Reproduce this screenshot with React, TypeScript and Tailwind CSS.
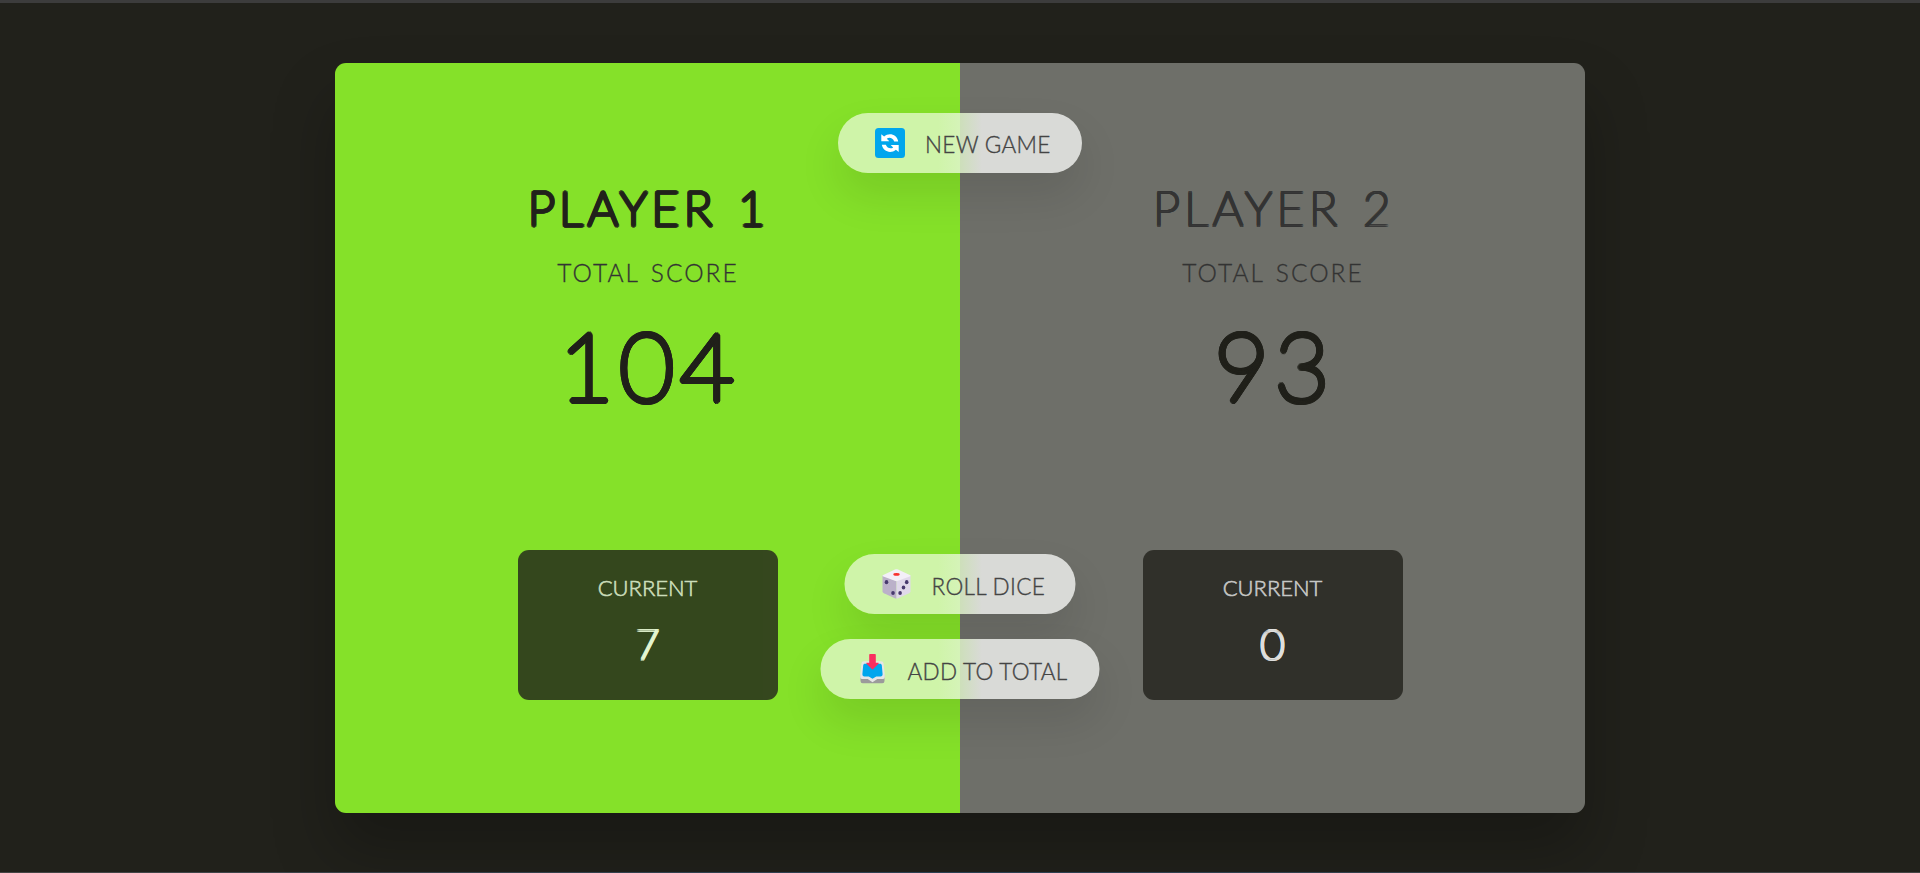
import type { CSSProperties, ReactNode } from "react";

// Thickens hairline lettering evenly in every direction, which rounds stroke ends.
function rounded(radius: number): CSSProperties {
  const shadows: string[] = [];
  const rings = radius > 2 ? [radius, radius * 0.55] : [radius];
  for (const r of rings) {
    for (let i = 0; i < 16; i++) {
      const a = (i * Math.PI) / 8;
      shadows.push(`${(r * Math.cos(a)).toFixed(2)}px ${(r * Math.sin(a)).toFixed(2)}px 0 currentColor`);
    }
  }
  return { textShadow: shadows.join(", ") };
}

function RestartIcon() {
  return (
    <svg viewBox="0 0 30 30" className="size-[30px]">
      <rect width="30" height="30" rx="3.5" fill="#00a6ed" />
      <path d="M6.3 6.2v7h8l-2.5-2.4c2.3-1.9 6-1 7.4 2.6h4C21.9 6.5 14.3 4.2 9.1 8.5z" fill="#fff" />
      <path d="M23.7 24v-7h-8l2.5 2.4c-2.3 1.9-6 1-7.4-2.6h-4C8.1 23.7 15.7 26 20.9 21.7z" fill="#fff" />
    </svg>
  );
}

function DiceIcon() {
  return (
    <svg viewBox="0 0 30 30" className="size-[30px]">
      <path d="M1 6.5 15 12v17.8c-1 0-12.200-5.300-13-5.800-.6-.4-1-.9-1-1.700z" fill="#bbb1c9" />
      <path d="M29 6.500 15 12v17.800c1 0 12.200-5.300 13-5.800.6-.4 1-.9 1-1.700z" fill="#e0d9ea" />
      <path d="M1.200 6.300 13.500.5c1-.4 2-.4 3 0L28.800 6.300c.3.300.3.700 0 .9L16 12c-.6.200-1.400.200-2 0L1.200 7.200c-.3-.2-.3-.6 0-.9z" fill="#f3eff8" />
      <ellipse cx="15" cy="5.400" rx="3.200" ry="1.400" fill="#f8312f" />
      <g fill="#483a6e">
        <ellipse cx="5" cy="13.200" rx="1.800" ry="2.100" />
        <ellipse cx="11.500" cy="24" rx="1.800" ry="2.100" />
        <ellipse cx="25.200" cy="13.200" rx="1.800" ry="2.100" />
        <ellipse cx="22" cy="18.500" rx="1.800" ry="2.100" />
        <ellipse cx="18.600" cy="24" rx="1.800" ry="2.100" />
      </g>
    </svg>
  );
}

function InboxIcon() {
  return (
    <svg viewBox="0 0 30 30" className="size-[30px]">
      <path d="M3 20.500h24v6.500a2.200 2.200 0 0 1-2.200 2.200H5.200A2.200 2.200 0 0 1 3 27z" fill="#9b9b9b" />
      <path d="M6.500 7.200h17c1.500 0 2.300.8 2.500 2.300l1.300 11.500v2c0 1.200-.6 1.900-1.800 1.900h-5.700L15 28.200l-4.800-3.300H4.500c-1.200 0-1.800-.7-1.800-1.900v-2L4 9.500c.2-1.500 1-2.300 2.500-2.300z" fill="#e6e6e6" />
      <path d="M7.500 9.700h15c1 0 1.700.6 1.800 1.600l.8 8.700c.1 1.500-.6 2.500-2 2.500h-4.400L15 24.800l-3.700-2.300H6.900c-1.400 0-2.100-1-2-2.500l.8-8.700c.1-1 .8-1.600 1.800-1.600z" fill="#00a6ed" />
      <path d="M12.500 0h5c.5 0 .8.300.8.800V8.700h2.200c.7 0 .9.600.5 1l-5.300 5.400c-.4.400-1 .4-1.400 0L9 9.700c-.4-.4-.2-1 .5-1h2.200V.8c0-.5.3-.8.8-.8z" fill="#f92f60" />
    </svg>
  );
}

type PlayerProps = { name: string; score: number; current: number; active?: boolean };

function Player({ name, score, current, active = false }: PlayerProps) {
  return (
    <section
      className={
        "flex flex-1 flex-col items-center pt-[120px] text-[#333] " +
        (active ? "bg-[#85e129]" : "bg-[#6e6f69]")
      }
    >
      <h2
        className={
          "h-[50px] pl-[3px] text-[48px] leading-[50px] font-thin tracking-[4.4px] whitespace-nowrap [word-spacing:3px] " +
          (active ? "text-[#21211b]" : "text-[#333]")
        }
        style={rounded(active ? 2.1 : 1.4)}
      >
        {name}
      </h2>
      <p className="mt-[15px] h-[50px] pl-px text-[24.5px] leading-[50px] font-light tracking-[2px] [word-spacing:3px] [-webkit-text-stroke:0.3px_#333]">
        TOTAL SCORE
      </p>
      <p
        className="mt-[17px] h-[100px] pl-[4px] text-[94.5px] leading-[100px] font-thin tracking-[5.5px] text-[#21211b]"
        style={rounded(3)}
      >
        {score}
      </p>
      <div className="mt-[135px] flex h-[150px] w-[260px] flex-col items-center rounded-[11px] bg-[#21211b] pt-[23px] text-white opacity-80">
        <p className="h-[30px] text-[22px] leading-[30px] font-light text-[#ddd] [-webkit-text-stroke:0.6px_#ddd]">
          CURRENT
        </p>
        <p className="mt-[16px] h-[50px] text-[42px] leading-[50px] font-thin" style={rounded(1.4)}>
          {current}
        </p>
      </div>
    </section>
  );
}

type GameButtonProps = { icon: ReactNode; place: string; label?: string; children: ReactNode };

function GameButton({ icon, place, label = "pt-[6px]", children }: GameButtonProps) {
  return (
    <button
      className={
        "absolute left-1/2 flex h-[60px] -translate-x-1/2 items-center rounded-full bg-[linear-gradient(90deg,#cff4a9_calc(50%_-_22px),#d5f3b8_50%,#cddfba_50%,#d9dad7_calc(50%_+_22px))] pl-[37px] text-[22.5px] font-light tracking-[0.3px] whitespace-nowrap text-[#444] shadow-[0_22px_44px_rgba(0,0,0,0.1)] [-webkit-text-stroke:0.35px_#444] " +
        place
      }
    >
      {icon}
      <span className={"ml-[20px] " + label}>{children}</span>
    </button>
  );
}

export default function App() {
  return (
    <div className="flex h-[873px] w-full flex-col items-center justify-between overflow-hidden border-t-[3px] border-t-[#3c3c3c] bg-[#21211b] pt-[60px] font-['Lato',sans-serif]">
      <main className="relative h-[750px] w-[1250px] shrink-0 rounded-[11px] shadow-[0_37px_62px_rgba(0,0,0,0.25)]">
        <div className="flex h-full overflow-hidden rounded-[11px]">
          <Player name="PLAYER 1" score={104} current={7} active />
          <Player name="PLAYER 2" score={93} current={0} />
        </div>
        <GameButton icon={<RestartIcon />} place="top-[50px] w-[244px]" label="pt-[4px]">
          NEW GAME
        </GameButton>
        <GameButton icon={<DiceIcon />} place="top-[491px] w-[231px]">ROLL DICE</GameButton>
        <GameButton icon={<InboxIcon />} place="top-[576px] w-[279px]">ADD TO TOTAL</GameButton>
      </main>
      <div className="h-px w-full bg-linear-to-r from-[#444] via-[#2d4358] to-[#444]" />
    </div>
  );
}
